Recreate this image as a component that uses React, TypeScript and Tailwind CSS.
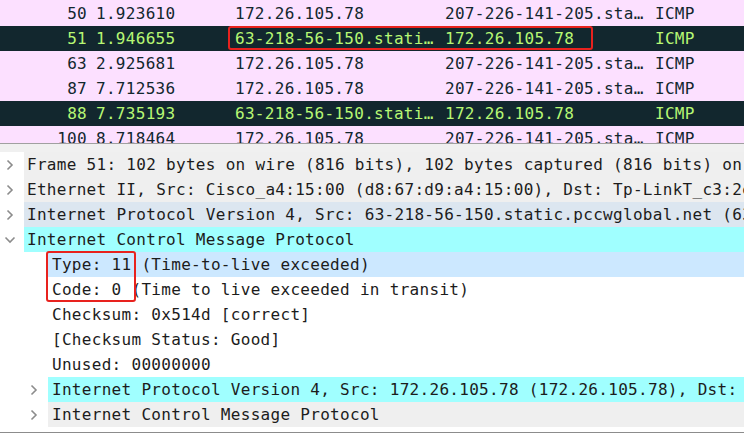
const packets = [
  { no: "50", time: "1.923610", src: "172.26.105.78", dst: "207-226-141-205.sta…", proto: "ICMP", err: false },
  { no: "51", time: "1.946655", src: "63-218-56-150.stati…", dst: "172.26.105.78", proto: "ICMP", err: true },
  { no: "63", time: "2.925681", src: "172.26.105.78", dst: "207-226-141-205.sta…", proto: "ICMP", err: false },
  { no: "87", time: "7.712536", src: "172.26.105.78", dst: "207-226-141-205.sta…", proto: "ICMP", err: false },
  { no: "88", time: "7.735193", src: "63-218-56-150.stati…", dst: "172.26.105.78", proto: "ICMP", err: true },
  { no: "100", time: "8.718464", src: "172.26.105.78", dst: "207-226-141-205.sta…", proto: "ICMP", err: false },
];

function ChevronRight() {
  return (
    <svg width="8" height="12" viewBox="0 0 8 12" className="shrink-0">
      <path d="M1.5 1.5 L6 6 L1.5 10.5" fill="none" stroke="#8c8c8c" strokeWidth="1.6" />
    </svg>
  );
}

function ChevronDown() {
  return (
    <svg width="12" height="8" viewBox="0 0 12 8" className="shrink-0">
      <path d="M1.5 1.5 L6 6 L10.5 1.5" fill="none" stroke="#8c8c8c" strokeWidth="1.6" />
    </svg>
  );
}

function TopRow({ text, bg, open }: { text: string; bg: string; open?: boolean }) {
  return (
    <div className="flex h-[25px] items-stretch">
      <div className="flex w-[24px] shrink-0 items-center justify-center pr-[4px]">
        {open ? <ChevronDown /> : <ChevronRight />}
      </div>
      <div className={`flex min-w-0 flex-1 items-center overflow-hidden whitespace-nowrap pl-[3px] ${bg}`}>{text}</div>
    </div>
  );
}

function ChildRow({ text, bg = "bg-white", expandable }: { text: string; bg?: string; expandable?: boolean }) {
  return (
    <div className="flex h-[25px] items-stretch">
      <div className="flex w-[48px] shrink-0 items-center justify-end pr-[10px]">
        {expandable && <ChevronRight />}
      </div>
      <div className={`flex min-w-0 flex-1 items-center overflow-hidden whitespace-nowrap pl-[4px] ${bg}`}>{text}</div>
    </div>
  );
}

export default function App() {
  return (
    <div className="h-[437px] w-[744px] overflow-hidden bg-white font-['DejaVu_Sans_Mono',monospace] text-[16px] tracking-[0.3px]">
      <div className="h-[144px] overflow-hidden border-b border-[#a0a0a0] bg-[#fce0ff] pt-px text-[#12272e]">
        {packets.map((p) => (
          <div
            key={p.no}
            className={`relative flex h-[25px] items-center whitespace-nowrap ${p.err ? "bg-[#12272e] text-[#b7f774]" : ""}`}
          >
            <div className="w-[87px] shrink-0 text-right">{p.no}</div>
            <div className="w-[148px] shrink-0 pl-[9px]">{p.time}</div>
            <div className="w-[210px] shrink-0">{p.src}</div>
            <div className="w-[210px] shrink-0">{p.dst}</div>
            <div>{p.proto}</div>
            {p.no === "51" && (
              <div className="absolute left-[228px] top-0 h-[24px] w-[365px] rounded-[3px] border-2 border-[#e8221e]" />
            )}
          </div>
        ))}
      </div>
      <div className="h-[8px] bg-[#f0f0f0]" />
      <div className="text-[#1c1c1c]">
        <TopRow text="Frame 51: 102 bytes on wire (816 bits), 102 bytes captured (816 bits) on interface 0" bg="bg-[#efefef]" />
        <TopRow text="Ethernet II, Src: Cisco_a4:15:00 (d8:67:d9:a4:15:00), Dst: Tp-LinkT_c3:2e:00" bg="bg-[#efefef]" />
        <TopRow text="Internet Protocol Version 4, Src: 63-218-56-150.static.pccwglobal.net (63.218.56.150)" bg="bg-[#dce6f0]" />
        <TopRow text="Internet Control Message Protocol" bg="bg-[#a0ffff]" open />
        <div className="relative">
          <ChildRow text="Type: 11 (Time-to-live exceeded)" bg="bg-[#cce8ff]" />
          <ChildRow text="Code: 0 (Time to live exceeded in transit)" />
          <div className="absolute left-[46px] top-[-1px] h-[51px] w-[90px] rounded-[3px] border-2 border-[#e8221e]" />
        </div>
        <ChildRow text="Checksum: 0x514d [correct]" />
        <ChildRow text="[Checksum Status: Good]" />
        <ChildRow text="Unused: 00000000" />
        <ChildRow text="Internet Protocol Version 4, Src: 172.26.105.78 (172.26.105.78), Dst: 207.226.141.205" bg="bg-[#a0ffff]" expandable />
        <ChildRow text="Internet Control Message Protocol" bg="bg-[#efefef]" expandable />
        <div className="h-[5px]" />
        <div className="border-t border-[#8c8c8c]" />
      </div>
    </div>
  );
}
